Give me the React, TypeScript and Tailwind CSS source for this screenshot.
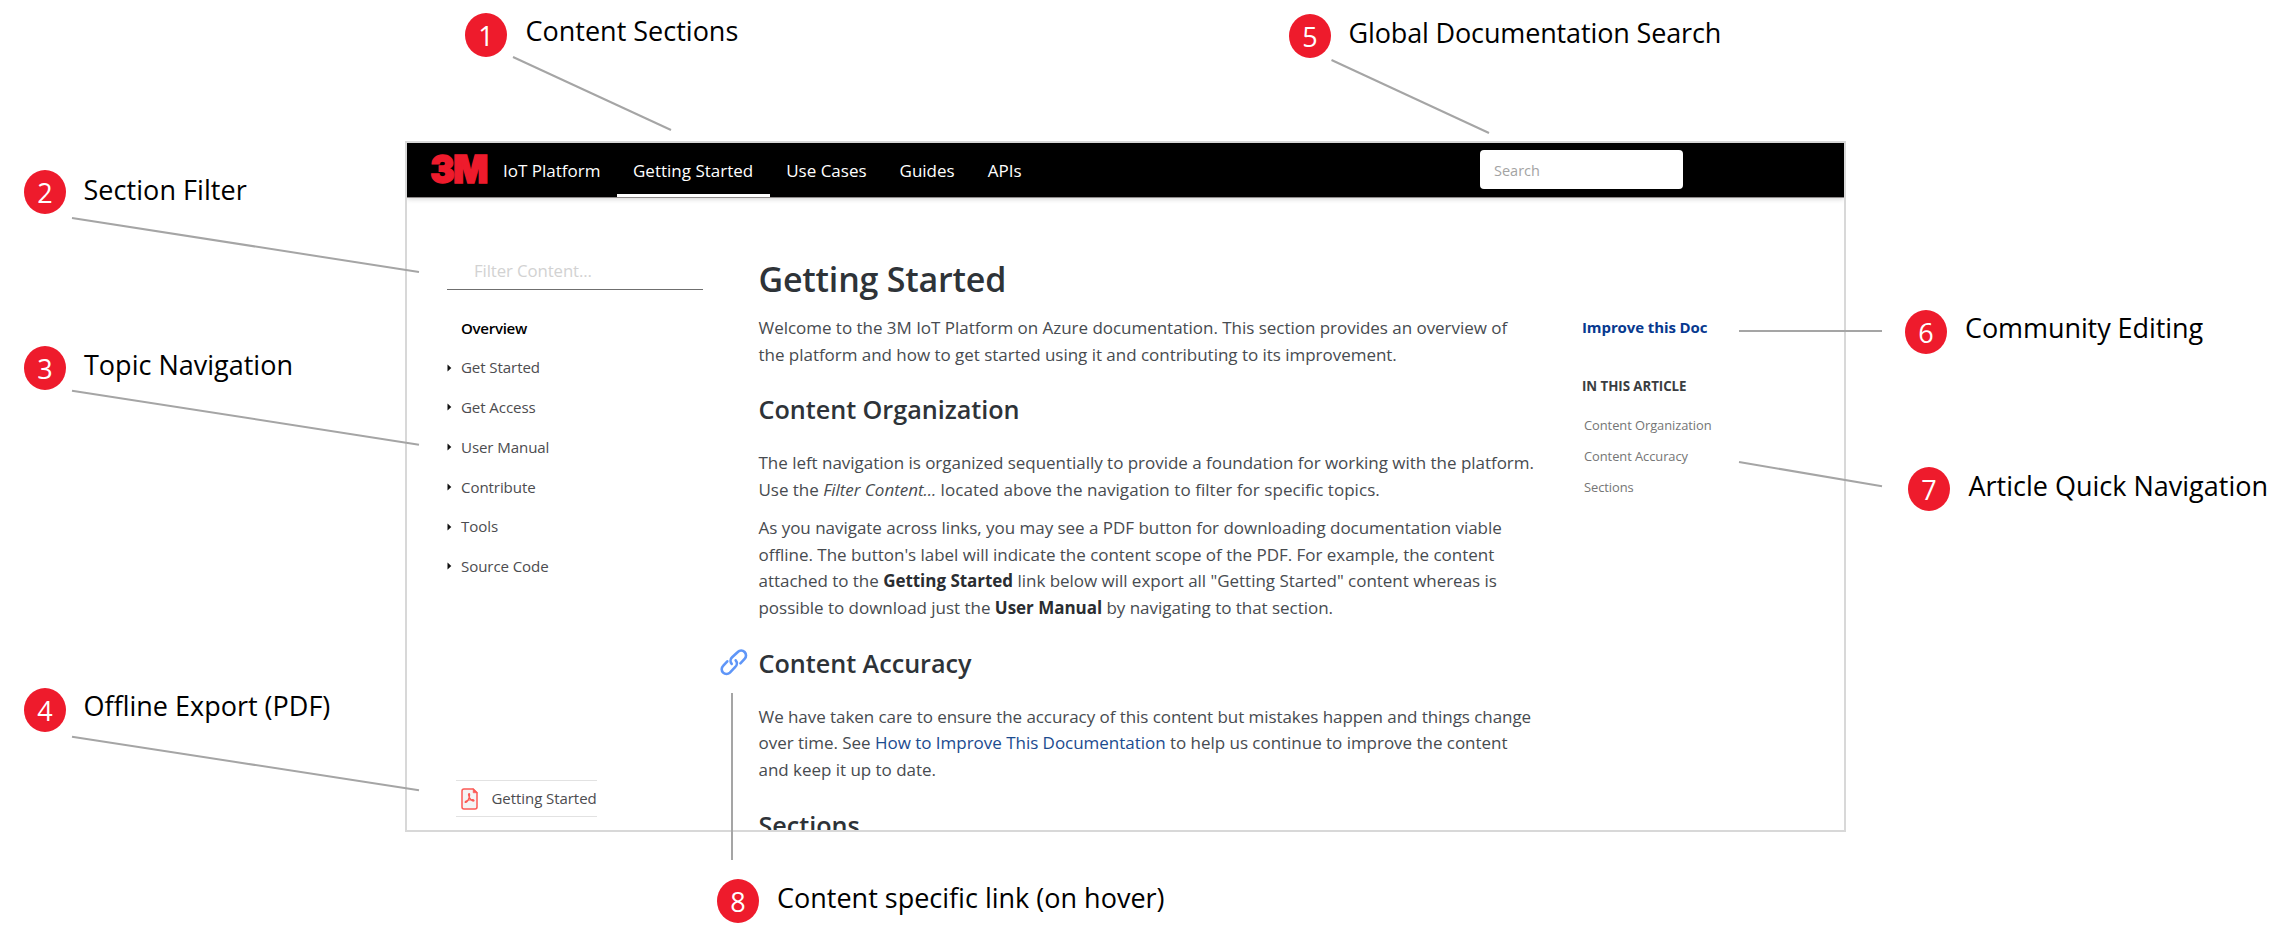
import React from "react";

type Callout = {
  n: number;
  label: string;
  place: string;
  labelOffset: string;
  line: [number, number, number, number];
};

const callouts: Callout[] = [
  { n: 1, label: "Content Sections", place: "left-[465px] top-[13px]", labelOffset: "pl-[18.5px] pb-[8px]", line: [513, 57, 671, 130] },
  { n: 2, label: "Section Filter", place: "left-[24px] top-[170px]", labelOffset: "pl-[17.5px] pb-[5px] tracking-[0.05px]", line: [72, 218, 419, 272] },
  { n: 3, label: "Topic Navigation", place: "left-[24px] top-[346px]", labelOffset: "pl-[18px] pb-[6px]", line: [72, 390.7, 419, 444.7] },
  { n: 4, label: "Offline Export (PDF)", place: "left-[24px] top-[688px]", labelOffset: "pl-[17.5px] pb-[8px]", line: [72, 736.7, 419, 790.3] },
  { n: 5, label: "Global Documentation Search", place: "left-[1289px] top-[14px]", labelOffset: "pl-[17.5px] pb-[6px] tracking-[-0.14px]", line: [1331.5, 60, 1489, 133] },
  { n: 6, label: "Community Editing", place: "left-[1905px] top-[310px]", labelOffset: "pl-[18px] pb-[8px] tracking-[-0.08px]", line: [1739, 331, 1882, 331] },
  { n: 7, label: "Article Quick Navigation", place: "left-[1908px] top-[467px]", labelOffset: "pl-[18.5px] pb-[6px]", line: [1739, 462, 1882, 486.3] },
  { n: 8, label: "Content specific link (on hover)", place: "left-[717px] top-[879px]", labelOffset: "pl-[18px] pb-[6px]", line: [732, 693, 732, 860] },
];

const tabs = ["Getting Started", "Use Cases", "Guides", "APIs"];
const topics = ["Get Started", "Get Access", "User Manual", "Contribute", "Tools", "Source Code"];
const articleLinks = ["Content Organization", "Content Accuracy", "Sections"];

function Logo() {
  return (
    <svg className="h-[54px] w-[64px] shrink-0 overflow-visible" viewBox="0 0 64 54" aria-label="3M">
      <text
        x="3.2"
        y="40.4"
        fontSize="38.5"
        fontWeight="900"
        fontFamily="Inter, 'Liberation Sans', sans-serif"
        letterSpacing="-1.6"
        fill="#ee1b2c"
        stroke="#ee1b2c"
        strokeWidth="1.5"
        textLength="56.5"
        lengthAdjust="spacingAndGlyphs"
      >
        3M
      </text>
    </svg>
  );
}

function PdfIcon() {
  return (
    <svg className="h-[22px] w-[17px] shrink-0" viewBox="0 0 17 22" fill="none" stroke="#fb5a55" strokeLinecap="round" strokeLinejoin="round">
      <path d="M3 1h9.2L16 4.8V19a2 2 0 0 1-2 2H3a2 2 0 0 1-2-2V3a2 2 0 0 1 2-2z" strokeWidth="1.5" fill="#f4f4f4" />
      <path d="M12.2 1v3.8H16z" fill="#fb5a55" strokeWidth="0.6" />
      <path
        d="M8.100 5.600c-.9 0-.7 1.800.2 3.700.8 1.700 2.300 3.700 4 3.800 1.200 0 1-1.500-.9-1.500-2.200 0-4.800.6-6.300 1.500-1.400.8-1.100 1.700-.2 1.300 1.500-.6 3-4 3.500-5.900.4-1.600.3-2.900-.3-2.900z"
        strokeWidth="1.200"
      />
    </svg>
  );
}

function LinkIcon() {
  return (
    <svg className="h-[27px] w-[28px]" viewBox="0 0 28 27" fill="none" stroke="#5f96f8" strokeWidth="2.6" strokeLinecap="round">
      <path d="M11.700 14.900a4.800 4.800 0 0 1 .4-6.600L17.800 3a4.800 4.800 0 0 1 6.800 6.800l-4.200 4.500" />
      <path d="M15.700 11.300a4.800 4.800 0 0 1-.4 6.600L9.900 23.600a4.800 4.800 0 0 1-6.800-6.800l4.200-4.500" />
    </svg>
  );
}

function Header() {
  return (
    <header className="relative z-10 flex h-[54px] shrink-0 items-stretch bg-black text-[17px] text-white shadow-[0_1px_0_#8e8a8a,0_2px_5px_rgba(0,0,0,0.18)]">
      <div className="flex w-[209.500px] items-center pl-[20px]">
        <Logo />
        <span className="whitespace-nowrap pl-[12px] pt-[2px]">IoT Platform</span>
      </div>
      <nav className="flex">
        {tabs.map((tab, i) => (
          <a
            key={tab}
            className={
              i === 0
                ? "flex items-center border-b-3 border-white px-[16.500px] pt-[5px]"
                : "flex items-center border-b-3 border-transparent px-[16.500px] pt-[5px]"
            }
          >
            {tab}
          </a>
        ))}
      </nav>
      <div className="ml-auto mr-[161px] mt-[7px] flex h-[39px] w-[203px] items-center rounded bg-white pl-[14px] pt-[2px] text-[14.500px] text-[#a3a3a3]">
        Search
      </div>
    </header>
  );
}

function Sidebar() {
  return (
    <aside className="flex w-[351.500px] shrink-0 flex-col pb-[13px] pl-[40px] pt-[54px]">
      <div className="flex h-[39px] w-[256px] items-center border-b border-[#6f6f6f] pl-[27px] pt-[1px] text-[16.800px] tracking-[-0.1px] text-[#d2d2d2]">
        Filter Content...
      </div>
      <ul className="pt-[18px] text-[15.1px] tracking-[-0.1px] text-[#4c4c4f]">
        <li className="flex h-[39.750px] items-center pl-[14px] font-semibold tracking-[-0.02em] text-black">Overview</li>
        {topics.map((topic) => (
          <li key={topic} className="flex h-[39.750px] items-center">
            <svg className="h-2 w-[14px]" viewBox="0 0 14 8">
              <path d="M0.500 0.500 4.300 4 0.500 7.500z" fill="#111" />
            </svg>
            {topic}
          </li>
        ))}
      </ul>
      <a className="ml-[9px] mt-auto flex h-[37px] w-[141px] items-center whitespace-nowrap border-y border-[#e2e2e2] pl-[5px] text-[15px] tracking-[-0.06px] text-[#4c4c4f]">
        <PdfIcon />
        <span className="pl-[13.500px]">Getting Started</span>
      </a>
    </aside>
  );
}

function Heading({ children, linked = false }: { children: React.ReactNode; linked?: boolean }) {
  return (
    <h2 className="relative mb-[24px] mt-[24px] text-[25.200px] font-semibold leading-[34px] text-[#2e3338]">
      {linked && (
        <span className="absolute left-[-39px] top-[3px]">
          <LinkIcon />
        </span>
      )}
      {children}
    </h2>
  );
}

function Article() {
  return (
    <main className="w-[823.500px] shrink-0 whitespace-nowrap pt-[59px] text-[17px] leading-[26.700px] tracking-[-0.03px] text-[#474b50]">
      <h1 className="mb-[13px] text-[34px] font-semibold leading-[46px] tracking-[-0.2px] text-[#2e3338]">Getting Started</h1>
      <p>
        Welcome to the 3M IoT Platform on Azure documentation. This section provides an overview of
        <br />
        the platform and how to get started using it and contributing to its improvement.
      </p>
      <Heading>Content Organization</Heading>
      <p>
        The left navigation is organized sequentially to provide a foundation for working with the platform.
        <br />
        Use the <em>Filter Content...</em> <span className="tracking-[0.05px]">located above the navigation to filter for specific topics.</span>
      </p>
      <p className="mt-[11px]">
        As you navigate across links, you may see a PDF button for downloading documentation viable
        <br />
        offline. The button's label will indicate the content scope of the PDF. For example, the content
        <br />
        attached to the <strong className="text-[#2a2d31]">Getting Started</strong> link below will export all "Getting Started" content whereas is
        <br />
        possible to download just the <strong className="text-[#2a2d31]">User Manual</strong> by navigating to that section.
      </p>
      <Heading linked>Content Accuracy</Heading>
      <p>
        <span className="tracking-[-0.06px]">We have taken care to ensure the accuracy of this content but mistakes happen and things change</span>
        <br />
        over time. See <a className="text-[#1b4b8f]">How to Improve This Documentation</a> to help us continue to improve the content
        <br />
        and keep it up to date.
      </p>
      <Heading>Sections</Heading>
    </main>
  );
}

function ArticleNav() {
  return (
    <aside className="pt-[118px]">
      <a className="block text-[15px] font-bold leading-[24px] tracking-[-0.1px] text-[#07398f]">Improve this Doc</a>
      <h5 className="mt-[35px] text-[13.300px] font-bold leading-[24px] tracking-[-0.05px] text-[#3a3d41]">IN THIS ARTICLE</h5>
      <ul className="pl-[2px] pt-[11.500px] text-[12.900px] leading-[31px] tracking-[-0.06px] text-[#757575]">
        {articleLinks.map((link) => (
          <li key={link}>{link}</li>
        ))}
      </ul>
    </aside>
  );
}

export default function App() {
  return (
    <div className="relative h-[943px] w-[2288px] overflow-hidden bg-white pl-[405px] pt-[141px] font-['Open_Sans','Noto_Sans',sans-serif]">
      <section className="flex h-[691px] w-[1441px] flex-col overflow-hidden border-2 border-[#d8d8d8]">
        <Header />
        <div className="flex min-h-0 grow">
          <Sidebar />
          <Article />
          <ArticleNav />
        </div>
      </section>

      <svg className="absolute inset-0 z-20 h-[943px] w-[2288px]" viewBox="0 0 2288 943" stroke="#a5a5a5" strokeWidth="2">
        {callouts.map(({ n, line: [x1, y1, x2, y2] }) => (
          <line key={n} x1={x1} y1={y1} x2={x2} y2={y2} />
        ))}
      </svg>
      {callouts.map((c) => (
        <div key={c.n} className={`absolute z-20 flex h-[44px] items-center whitespace-nowrap text-[27px] leading-[36px] ${c.place}`}>
          <span className="flex h-[44px] w-[42px] items-center justify-center rounded-[50%] bg-[#ee1b2c] pt-px text-white">{c.n}</span>
          <span className={`text-black ${c.labelOffset}`}>{c.label}</span>
        </div>
      ))}
    </div>
  );
}
